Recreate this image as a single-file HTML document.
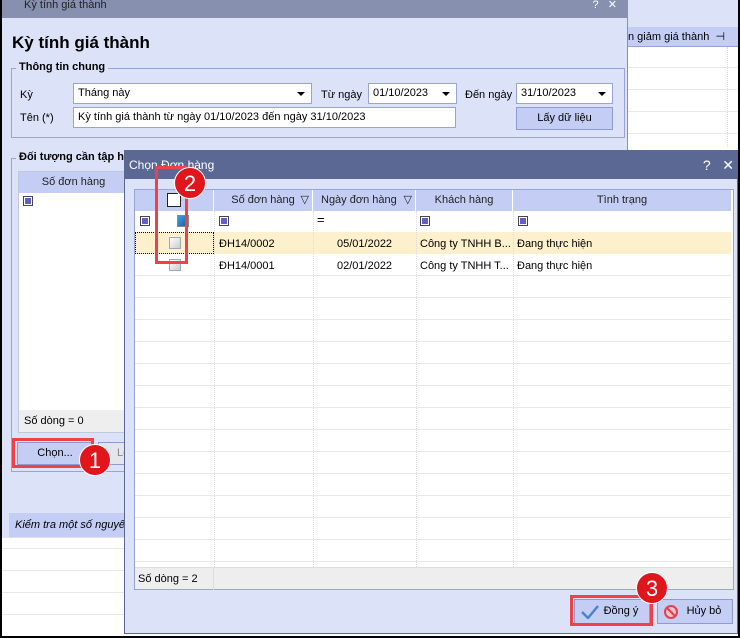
<!DOCTYPE html><html><head><meta charset="utf-8"><style>
*{box-sizing:border-box;margin:0;padding:0}
body{width:740px;height:638px;background:#000;font-family:"Liberation Sans",sans-serif;font-size:11px;color:#000;position:relative;overflow:hidden}
.a{position:absolute;white-space:nowrap}
.grid{background-image:linear-gradient(#e8e8e8 1px,transparent 1px);background-size:100% 22px}
.inp{position:absolute;background:#fff;border:1px solid #98a4d8;padding:3px 4px;font-size:11px;white-space:nowrap;overflow:hidden}
.arr{position:absolute;right:6px;top:8px;width:0;height:0;border-left:4px solid transparent;border-right:4px solid transparent;border-top:4px solid #000}
.btn{position:absolute;background:#c4cef4;border:1px solid #8e9ad0;text-align:center;font-size:11px}
.hd{position:absolute;background:#c4cef4;border-right:1px solid #fff;text-align:center;line-height:21px;font-size:11px;color:#222}
.cb{position:absolute;width:10px;height:10px;border:1px solid #445;background:#fff}
.cb:after{content:"";position:absolute;left:1px;top:1px;width:6px;height:6px;background:#6060c8}
.badge{position:absolute;width:32px;height:32px;border-radius:50%;background:#e0161c;color:#fff;font-size:22px;text-align:center;line-height:32px;border:1px solid #fff}
.red{position:absolute;border:3px solid #f04048}
.vl{position:absolute;border-left:1px dotted #ddd}
</style></head><body>
<div class="a" style="left:2px;top:0;width:736px;height:636px;background:#fff"></div>
<div class="a grid" style="left:2px;top:538px;width:736px;height:98px;background-position:0 10px"></div>
<div class="a" style="left:628px;top:0;width:110px;height:27px;background:#dce2f8"></div>
<div class="a" style="left:628px;top:27px;width:110px;height:20px;background:#c4cef4;border-bottom:1px solid #98a4d8;line-height:20px;overflow:hidden">n giảm giá thành &nbsp;⊣</div>
<div class="a grid" style="left:628px;top:47px;width:110px;height:100px;background-position:0 20px"></div>
<div class="vl" style="left:727px;top:47px;height:100px"></div>
<div class="a" style="left:2px;top:0;width:626px;height:538px;background:#dce2f8;border-right:1px solid #8890b0">
 <div class="a" style="left:0;top:0;width:625px;height:18px;background:#8890b0;color:#222;line-height:10px;padding-left:22px">Kỳ tính giá thành<span style="position:absolute;right:10px;color:#fff">?&nbsp;&nbsp;&nbsp;✕</span></div>
 <div class="a" style="left:10px;top:33px;font-size:17px;font-weight:bold">Kỳ tính giá thành</div>
 <div class="a" style="left:9px;top:68px;height:70px;border:1px solid #98a4d8;width:614px"></div>
 <div class="a" style="left:14px;top:61px;background:#dce2f8;padding:0 3px;font-weight:bold">Thông tin chung</div>
 <div class="a" style="left:18px;top:89px">Kỳ</div>
 <div class="inp" style="left:71px;top:83px;width:239px;height:21px">Tháng này<span class="arr"></span></div>
 <div class="a" style="left:319px;top:89px">Từ ngày</div>
 <div class="inp" style="left:366px;top:83px;width:89px;height:21px">01/10/2023<span class="arr"></span></div>
 <div class="a" style="left:463px;top:89px">Đến ngày</div>
 <div class="inp" style="left:514px;top:83px;width:97px;height:21px">31/10/2023<span class="arr"></span></div>
 <div class="a" style="left:18px;top:112px">Tên (*)</div>
 <div class="inp" style="left:71px;top:107px;width:383px;height:21px">Kỳ tính giá thành từ ngày 01/10/2023 đến ngày 31/10/2023</div>
 <div class="btn" style="left:514px;top:107px;width:97px;height:23px;line-height:21px">Lấy dữ liệu</div>
 <div class="a" style="left:9px;top:158px;width:200px;height:314px;border:1px solid #98a4d8"></div>
 <div class="a" style="left:14px;top:151px;background:#dce2f8;padding:0 3px;font-weight:bold">Đối tượng cần tập hợp</div>
 <div class="a" style="left:16px;top:171px;width:200px;height:262px;background:#fff;border:1px solid #c0c8e0"></div>
 <div class="hd" style="left:17px;top:172px;width:110px;height:21px">Số đơn hàng</div>
 <div class="cb" style="left:21px;top:196px"></div>
 <div class="a" style="left:17px;top:410px;width:200px;height:22px;background:#eee;line-height:22px;padding-left:5px">Số dòng = 0</div>
 <div class="btn" style="left:15px;top:442px;width:76px;height:23px;line-height:21px">Chọn...</div>
 <div class="btn" style="left:96px;top:442px;width:40px;height:23px;line-height:21px;background:#e4e6ee;color:#888;text-align:left;padding-left:18px">Lo</div>
 <div class="a" style="left:7px;top:513px;width:616px;height:24px;background:#c4cef4;font-style:italic;line-height:24px;padding-left:6px">Kiểm tra một số nguyên nhân</div>
</div>
<div class="red" style="left:12px;top:438px;width:82px;height:30px"></div>
<div class="badge" style="left:79px;top:444px">1</div>
<div class="a" style="left:124px;top:150px;width:614px;height:484px;background:#dce2f8;border:1px solid #5c6894">
 <div class="a" style="left:0;top:0;width:613px;height:28px;background:#5c6894;color:#fff;font-size:12px;line-height:28px;padding-left:4px">Chọn Đơn hàng<span style="position:absolute;right:4px;font-size:14px">?&nbsp;&nbsp;&nbsp;✕</span></div>
 <div class="a" style="left:9px;top:38px;width:600px;height:401px;background:#fff;border:1px solid #98a4d8">
  <div class="hd" style="left:0;top:0;width:22px;height:21px"></div>
  <div class="hd" style="left:22px;top:0;width:57px;height:21px"></div>
  <div class="a" style="left:32px;top:3px;width:14px;height:14px;border:1px solid #222;background:#fff"></div>
  <div class="hd" style="left:79px;top:0;width:99px;height:21px">Số đơn hàng<span style="position:absolute;right:3px">▽</span></div>
  <div class="hd" style="left:178px;top:0;width:103px;height:21px;text-align:left;padding-left:8px">Ngày đơn hàng<span style="position:absolute;right:3px">▽</span></div>
  <div class="hd" style="left:281px;top:0;width:97px;height:21px">Khách hàng</div>
  <div class="hd" style="left:378px;top:0;width:218px;height:21px;border-right:none">Tình trạng</div>
  <div class="cb" style="left:5px;top:26px"></div>
  <div class="a" style="left:42px;top:25px;width:12px;height:12px;border:1px solid #888;background:linear-gradient(135deg,#40a0e0,#1060a0)"></div>
  <div class="cb" style="left:84px;top:26px"></div>
  <div class="a" style="left:182px;top:22px;font-size:13px">=</div>
  <div class="cb" style="left:285px;top:26px"></div>
  <div class="cb" style="left:383px;top:26px"></div>
  <div class="a" style="left:0;top:42px;width:596px;height:22px;background:#fcf1cc"></div>
  <div class="a" style="left:0;top:42px;width:79px;height:22px;border:1px dotted #000"></div>
  <div class="a" style="left:0;top:64px;width:596px;height:313px;background-image:linear-gradient(#e8e8e8 1px,transparent 1px);background-size:100% 22px;background-position:0 -1px"></div>
  <div class="a" style="left:34px;top:47px;width:12px;height:12px;border:1px solid #9ab;background:linear-gradient(135deg,#fff,#ccc)"></div>
  <div class="a" style="left:34px;top:69px;width:12px;height:12px;border:1px solid #9ab;background:linear-gradient(135deg,#fff,#ccc)"></div>
  <div class="vl" style="left:79px;top:21px;height:356px"></div>
  <div class="vl" style="left:178px;top:21px;height:356px"></div>
  <div class="vl" style="left:281px;top:21px;height:356px"></div>
  <div class="vl" style="left:378px;top:21px;height:356px"></div>
  <div class="a" style="left:84px;top:48px">ĐH14/0002</div>
  <div class="a" style="left:202px;top:48px">05/01/2022</div>
  <div class="a" style="left:285px;top:48px">Công ty TNHH B...</div>
  <div class="a" style="left:382px;top:48px">Đang thực hiện</div>
  <div class="a" style="left:84px;top:70px">ĐH14/0001</div>
  <div class="a" style="left:202px;top:70px">02/01/2022</div>
  <div class="a" style="left:285px;top:70px">Công ty TNHH T...</div>
  <div class="a" style="left:382px;top:70px">Đang thực hiện</div>
  <div class="a" style="left:0;top:377px;width:598px;height:22px;background:#eee;border-top:1px solid #ddd;line-height:22px;padding-left:3px">Số dòng = 2<span style="position:absolute;left:78px;top:0;height:22px;border-left:1px solid #ddd"></span></div>
 </div>
 <div class="btn" style="left:449px;top:448px;width:76px;height:25px;line-height:23px;padding-left:18px"><svg style="position:absolute;left:6px;top:5px" width="18" height="14"><path d="M1 7 L7 13 L17 1" stroke="#5080d0" stroke-width="2.5" fill="none"/></svg>Đồng ý</div>
 <div class="btn" style="left:532px;top:448px;width:76px;height:25px;line-height:23px;padding-left:18px"><svg style="position:absolute;left:5px;top:4px" width="16" height="16"><circle cx="8" cy="8" r="6" stroke="#e04050" stroke-width="2" fill="#f8c0c8"/><path d="M4 4 L12 12" stroke="#e04050" stroke-width="2"/></svg>Hủy bỏ</div>
</div>
<div class="red" style="left:155px;top:166px;width:33px;height:98px"></div>
<div class="badge" style="left:174px;top:167px">2</div>
<div class="red" style="left:570px;top:595px;width:83px;height:31px"></div>
<div class="badge" style="left:636px;top:572px">3</div>
</body></html>
